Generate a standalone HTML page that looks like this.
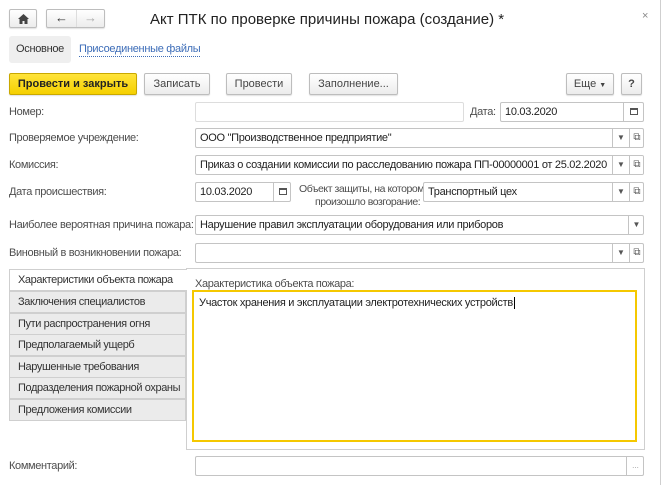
<!DOCTYPE html>
<html><head><meta charset="utf-8"><style>
*{box-sizing:border-box;margin:0;padding:0}
body{width:661px;height:485px;background:#fff;position:relative;overflow:hidden;font-family:"Liberation Sans",Arial,sans-serif;font-size:11px;color:#333}
.a{position:absolute}
.btn{position:absolute;border:1px solid #bdbdbd;border-radius:2px;background:linear-gradient(#fff,#ececec);text-align:center;color:#444;font-size:11px;line-height:20px;height:22px;box-shadow:0 1px 1px rgba(0,0,0,.12)}
.fld{position:absolute;border:1px solid #c4c4c4;border-radius:2px;background:#fff;height:20px;line-height:18px;padding-left:4px;color:#222;white-space:nowrap;overflow:hidden;letter-spacing:-0.3px}
.lbl{position:absolute;color:#4d4d4d;line-height:14px;white-space:nowrap;letter-spacing:-0.35px}
.dv{position:absolute;top:0;bottom:0;border-left:1px solid #c4c4c4}
.ic{position:absolute;top:0;height:18px;line-height:17px;text-align:center;color:#555;font-size:8px;letter-spacing:0}
.tab{position:absolute;left:9px;width:177px;height:22px;border:1px solid #cfcfcf;background:#ebebeb;padding-left:8px;line-height:20px;color:#333;white-space:nowrap;letter-spacing:-0.4px}
.cal{display:block;margin:5px auto 0}
</style></head><body>
<div class="a" style="left:660px;top:0;width:1px;height:485px;background:#cfcfcf"></div>
<div class="btn" style="left:9px;top:9px;width:28px;height:19px;line-height:17px"><svg width="11" height="10" viewBox="0 0 11 10" style="margin-top:4px"><path d="M5.5 0L0 5h1.5v5h3V7h2v3h3V5H11z" fill="#444"/></svg></div>
<div class="btn" style="left:46px;top:9px;width:59px;height:19px;line-height:16px"><span style="position:absolute;left:8px;font-size:13px;color:#333">&#8592;</span><div class="dv" style="left:29px;border-color:#ddd"></div><span style="position:absolute;left:37px;font-size:13px;color:#aaa">&#8594;</span></div>
<div class="a" style="left:150px;top:11px;font-size:15px;color:#222">Акт ПТК по проверке причины пожара (создание) *</div>
<div class="a" style="left:642px;top:10px;color:#888;font-size:11px">×</div>
<div class="a" style="left:9px;top:36px;width:62px;height:27px;background:#efefef;border-radius:3px;line-height:27px;text-align:center;color:#333;letter-spacing:-0.3px">Основное</div>
<div class="a" style="left:79px;top:43px;color:#3d6db8;border-bottom:1px dotted #3d6db8;line-height:13px;letter-spacing:-0.3px">Присоединенные файлы</div>
<div class="btn" style="left:9px;top:73px;width:128px;background:linear-gradient(#ffe43a,#f5d000);border-color:#c9a800;font-weight:bold;color:#222">Провести и закрыть</div>
<div class="btn" style="left:144px;top:73px;width:66px">Записать</div>
<div class="btn" style="left:226px;top:73px;width:66px">Провести</div>
<div class="btn" style="left:309px;top:73px;width:89px">Заполнение...</div>
<div class="btn" style="left:566px;top:73px;width:48px">Еще <span style="font-size:7px">▼</span></div>
<div class="btn" style="left:621px;top:73px;width:21px;font-weight:bold">?</div>

<div class="lbl" style="left:9px;top:105px">Номер:</div>
<div class="fld" style="left:195px;top:102px;width:269px;border-color:#ddd"></div>
<div class="lbl" style="left:470px;top:105px">Дата:</div>
<div class="fld" style="left:500px;top:102px;width:144px">10.03.2020<div class="dv" style="left:122px"></div><div class="ic" style="left:123px;width:20px"><svg class="cal" width="8" height="7" viewBox="0 0 8 7"><rect x=".5" y=".5" width="7" height="6" fill="none" stroke="#555"/><rect x="0" y="0" width="8" height="2" fill="#555"/></svg></div></div>

<div class="lbl" style="left:9px;top:131px">Проверяемое учреждение:</div>
<div class="fld" style="left:195px;top:128px;width:449px">ООО "Производственное предприятие"<div class="dv" style="left:416px"></div><div class="ic" style="left:417px;width:16px">▼</div><div class="dv" style="left:433px"></div><div class="ic" style="left:434px;width:14px;font-size:10px">⧉</div></div>

<div class="lbl" style="left:9px;top:158px">Комиссия:</div>
<div class="fld" style="left:195px;top:155px;width:449px">Приказ о создании комиссии по расследованию пожара ПП-00000001 от 25.02.2020<div class="dv" style="left:416px;background:#fff;width:33px"></div><div class="ic" style="left:417px;width:16px">▼</div><div class="dv" style="left:433px"></div><div class="ic" style="left:434px;width:14px;font-size:10px">⧉</div></div>

<div class="lbl" style="left:9px;top:185px">Дата происшествия:</div>
<div class="fld" style="left:195px;top:182px;width:96px">10.03.2020<div class="dv" style="left:77px"></div><div class="ic" style="left:78px;width:17px"><svg class="cal" width="8" height="7" viewBox="0 0 8 7"><rect x=".5" y=".5" width="7" height="6" fill="none" stroke="#555"/><rect x="0" y="0" width="8" height="2" fill="#555"/></svg></div></div>
<div class="lbl" style="left:299px;top:183px;line-height:13px;font-size:10.5px;letter-spacing:-0.45px">Объект защиты, на котором<br><span style="padding-left:16px">произошло возгорание:</span></div>
<div class="fld" style="left:423px;top:182px;width:221px">Транспортный цех<div class="dv" style="left:188px"></div><div class="ic" style="left:189px;width:16px">▼</div><div class="dv" style="left:205px"></div><div class="ic" style="left:206px;width:14px;font-size:10px">⧉</div></div>

<div class="lbl" style="left:9px;top:218px">Наиболее вероятная причина пожара:</div>
<div class="fld" style="left:195px;top:215px;width:449px">Нарушение правил эксплуатации оборудования или приборов<div class="dv" style="left:432px"></div><div class="ic" style="left:433px;width:15px">▼</div></div>

<div class="lbl" style="left:9px;top:246px">Виновный в возникновении пожара:</div>
<div class="fld" style="left:195px;top:243px;width:449px"><div class="dv" style="left:416px"></div><div class="ic" style="left:417px;width:16px">▼</div><div class="dv" style="left:433px"></div><div class="ic" style="left:434px;width:14px;font-size:10px">⧉</div></div>

<div class="a" style="left:186px;top:268px;width:459px;height:182px;border:1px solid #cfcfcf"></div>
<div class="tab" style="top:269px;background:#fff;border-right:none;width:178px">Характеристики объекта пожара</div>
<div class="tab" style="top:291px">Заключения специалистов</div>
<div class="tab" style="top:313px">Пути распространения огня</div>
<div class="tab" style="top:334px">Предполагаемый ущерб</div>
<div class="tab" style="top:356px">Нарушенные требования</div>
<div class="tab" style="top:377px">Подразделения пожарной охраны</div>
<div class="tab" style="top:399px">Предложения комиссии</div>
<div class="lbl" style="left:195px;top:277px">Характеристика объекта пожара:</div>
<div class="a" style="left:192px;top:290px;width:445px;height:152px;border:2px solid #f5c800;padding:5px 0 0 5px;color:#222;letter-spacing:-0.3px">Участок хранения и эксплуатации электротехнических устройств<span style="border-left:1px solid #000;margin-left:1px"></span></div>

<div class="lbl" style="left:9px;top:459px">Комментарий:</div>
<div class="fld" style="left:195px;top:456px;width:449px"><div class="dv" style="left:430px"></div><div class="ic" style="left:431px;width:17px;color:#999">...</div></div>
</body></html>
